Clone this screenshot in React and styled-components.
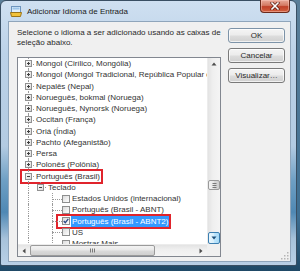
import React from 'react';
import styled, { createGlobalStyle, css } from 'styled-components';

const GlobalStyle = createGlobalStyle`
  html, body { margin: 0; padding: 0; }
  body {
    width: 300px;
    height: 271px;
    overflow: hidden;
    background: #24506f;
    font-family: "Liberation Sans", Arial, sans-serif;
    font-size: 8px;
    color: #2a2a2a;
  }
`;

const Desktop = styled.div`
  width: 300px;
  height: 271px;
  background: linear-gradient(to bottom, #5b7f99 0%, #3d6e92 80%, #1f4966 100%);
`;

const Window = styled.div`
  box-sizing: border-box;
  width: 297px;
  height: 266px;
  display: flex;
  flex-direction: column;
  padding: 0 5px 3px 7px;
  border: 1px solid #3a4f63;
  border-radius: 6px 6px 2px 2px;
  background: linear-gradient(to bottom,
    #cfe0f1 0%, #bcd2e8 20%, #b3cbe2 55%, #6e9fc4 68%, #4f88b4 80%, #a7c2da 90%, #b9d0e6 100%);
`;

const TitleBar = styled.div`
  height: 20px;
  display: flex;
  align-items: center;
  padding-left: 2px;
`;

const Title = styled.span`
  margin-left: 5px;
  font-size: 8px;
  color: #1a1a1a;
`;

const CloseButton = styled.div`
  align-self: flex-start;
  margin: -1px 1px 0 auto;
  width: 30px;
  height: 13px;
  display: flex;
  align-items: center;
  justify-content: center;
  box-sizing: border-box;
  border: 1px solid #6b2a1c;
  border-top: none;
  border-radius: 0 0 4px 4px;
  background: linear-gradient(to bottom, #e9a99a 0%, #d47a64 45%, #c0412a 55%, #d2603f 100%);
  box-shadow: inset 0 0 0 1px rgba(255, 210, 200, 0.45);
`;

const Client = styled.div`
  position: relative;
  flex: 1;
  display: flex;
  padding: 6px 5px 0 8px;
  background: #f0f0f0;
  border: 1px solid #8fa5bb;
`;

const MainCol = styled.div`
  width: 204px;
  display: flex;
  flex-direction: column;
`;

const Description = styled.p`
  margin: 0 0 9px;
  line-height: 10px;
`;

const ButtonCol = styled.div`
  width: 57px;
  margin-left: 7px;
  display: flex;
  flex-direction: column;
  gap: 5px;
`;

const Button = styled.div`
  height: 15px;
  box-sizing: border-box;
  display: flex;
  align-items: center;
  justify-content: center;
  white-space: nowrap;
  overflow: hidden;
  border: 1px solid ${p => (p.$default ? '#7d93a8' : '#7a7a7a')};
  border-radius: 3px;
  background: linear-gradient(to bottom, #f4f4f4 0%, #ececec 48%, #dddddd 52%, #d0d0d0 100%);
  box-shadow: inset 0 0 0 1px rgba(255, 255, 255, 0.7);
`;

const TreeBox = styled.div`
  height: 200px;
  box-sizing: border-box;
  border: 1px solid #828790;
  background: #fff;
  display: grid;
  grid-template-columns: 1fr 13px;
  grid-template-rows: 1fr 12px;
  overflow: hidden;
`;

const Viewport = styled.div`
  overflow: hidden;
  white-space: nowrap;
  color: #333;
`;

const Row = styled.div`
  height: 11.25px;
  display: flex;
  align-items: stretch;
  padding-left: 4px;
`;

const dotted = '1px dotted #9a9a9a';

const Guide = styled.div`
  position: relative;
  width: 12px;
  flex: none;
  ${p => p.$line && css`
    &::before {
      content: '';
      position: absolute;
      left: 6px;
      top: 0;
      bottom: 0;
      border-left: ${dotted};
    }
  `}
`;

const Expander = styled.div`
  position: relative;
  width: 12px;
  flex: none;
  display: flex;
  align-items: center;
  justify-content: center;
  &::before {
    content: '';
    position: absolute;
    left: 6px;
    top: 0;
    height: ${p => (p.$last ? '50%' : '100%')};
    border-left: ${dotted};
  }
  &::after {
    content: '';
    position: absolute;
    left: 6px;
    right: ${p => (p.$leaf ? '-4px' : '0')};
    top: 50%;
    border-top: ${dotted};
  }
  svg { position: relative; z-index: 1; }
`;

const Mark = styled.div`
  display: flex;
  align-items: stretch;
  ${p => p.$marked && css`
    outline: 2px solid #e0242c;
    outline-offset: 0;
  `}
`;

const Check = styled.div`
  align-self: center;
  width: 8px;
  height: 8px;
  box-sizing: border-box;
  margin-left: 4px;
  border: 1px solid #8e8f8f;
  background: linear-gradient(135deg, #dcdcdc 0%, #f4f4f4 70%, #ffffff 100%);
  display: flex;
  align-items: center;
  justify-content: center;
`;

const Label = styled.span`
  display: flex;
  align-items: center;
  padding: 0 1px;
  margin-left: 1px;
  ${p => p.$selected && css`
    background: #3399ff;
    color: #fff;
  `}
`;

const VScroll = styled.div`
  display: flex;
  flex-direction: column;
  background: linear-gradient(to right, #e3e3e3 0%, #efefef 40%, #f4f4f4 100%);
  border-left: 1px solid #ececec;
`;

const HScroll = styled.div`
  display: flex;
  background: linear-gradient(to bottom, #e3e3e3 0%, #efefef 40%, #f4f4f4 100%);
  border-top: 1px solid #ececec;
`;

const Corner = styled.div`
  background: #f0f0f0;
`;

const ArrowBtn = styled.div`
  flex: none;
  width: ${p => (p.$horizontal ? '12px' : 'auto')};
  height: ${p => (p.$horizontal ? 'auto' : '12px')};
  box-sizing: border-box;
  display: flex;
  align-items: center;
  justify-content: center;
  ${p => p.$hover && css`
    border: 1px solid #3c7fb1;
    border-radius: 2px;
    background: linear-gradient(to right, #eaf6fd 0%, #d9f0fc 45%, #bee6fd 55%, #a7d9f5 100%);
  `}
`;

const Track = styled.div`
  flex: 1;
  display: flex;
  flex-direction: ${p => (p.$horizontal ? 'row' : 'column')};
`;

const Thumb = styled.div`
  box-sizing: border-box;
  border: 1px solid #9a9a9a;
  border-radius: 2px;
  display: flex;
  align-items: center;
  justify-content: center;
  ${p => (p.$horizontal
    ? css`
      width: ${p.$size}px;
      margin-left: ${p.$offset}px;
      background: linear-gradient(to bottom, #f3f3f3 0%, #e8e8e8 45%, #d9d9d9 55%, #cfcfcf 100%);
    `
    : css`
      height: ${p.$size}px;
      margin-top: ${p.$offset}px;
      background: linear-gradient(to right, #f3f3f3 0%, #e8e8e8 45%, #d9d9d9 55%, #cfcfcf 100%);
    `)}
`;

const SizeGrip = styled.svg`
  position: absolute;
  right: 1px;
  bottom: 1px;
`;

const WindowIcon = () => (
  <svg width="12" height="11" viewBox="0 0 12 11">
    <rect x="1.5" y="0.5" width="9" height="6" fill="#dfeefa" stroke="#6e95bd" />
    <rect x="2.5" y="1.5" width="7" height="2" fill="#9cc4e8" />
    <path d="M0.5 6.5 L11.5 6.5 L10.5 10.5 L1.5 10.5 Z" fill="#f2c23a" stroke="#9b7418" />
  </svg>
);

const CloseGlyph = () => (
  <svg width="10" height="8" viewBox="0 0 10 8">
    <path d="M2 1 L8 7 M8 1 L2 7" stroke="#5a1a10" strokeWidth="3" strokeLinecap="square" />
    <path d="M2 1 L8 7 M8 1 L2 7" stroke="#ffffff" strokeWidth="1.6" strokeLinecap="square" />
  </svg>
);

const ExpandBox = ({ open }) => (
  <svg width="7" height="7" viewBox="0 0 7 7">
    <defs>
      <linearGradient id="eb" x1="0" y1="0" x2="1" y2="1">
        <stop offset="0" stopColor="#ffffff" />
        <stop offset="1" stopColor="#d8d8d8" />
      </linearGradient>
    </defs>
    <rect x="0.5" y="0.5" width="6" height="6" fill="url(#eb)" stroke="#919191" />
    <path d="M2 3.5 H5" stroke="#404040" />
    {!open && <path d="M3.5 2 V5" stroke="#404040" />}
  </svg>
);

const CheckGlyph = () => (
  <svg width="6" height="6" viewBox="0 0 6 6">
    <path d="M0.8 3 L2.3 4.7 L5.3 0.9" fill="none" stroke="#2a4a86" strokeWidth="1.3" />
  </svg>
);

const Arrow = ({ dir, color = '#4d4d4d' }) => {
  const d = {
    up: 'M0.5 3.5 L3 0.5 L5.5 3.5 Z',
    down: 'M0.5 0.5 L3 3.5 L5.5 0.5 Z',
    left: 'M3.5 0.5 L0.5 3 L3.5 5.5 Z',
    right: 'M0.5 0.5 L3.5 3 L0.5 5.5 Z',
  }[dir];
  const vertical = dir === 'up' || dir === 'down';
  return (
    <svg width={vertical ? 6 : 4} height={vertical ? 4 : 6} viewBox={vertical ? '0 0 6 4' : '0 0 4 6'}>
      <path d={d} fill={color} />
    </svg>
  );
};

const Grip = ({ horizontal }) => (
  <svg width="5" height="5" viewBox="0 0 5 5">
    {horizontal
      ? [0, 2, 4].map(x => <path key={x} d={`M${x + 0.5} 0.5 V4.5`} stroke="#7a7a7a" />)
      : [0, 2, 4].map(y => <path key={y} d={`M0.5 ${y + 0.5} H4.5`} stroke="#7a7a7a" />)}
  </svg>
);

const items = [
  { level: 0, text: 'Mongol (Cirílico, Mongólia)' },
  { level: 0, text: 'Mongol (Mongol Tradicional, República Popular da China)' },
  { level: 0, text: 'Nepalês (Nepal)' },
  { level: 0, text: 'Norueguês, bokmal (Noruega)' },
  { level: 0, text: 'Norueguês, Nynorsk (Noruega)' },
  { level: 0, text: 'Occitan (França)' },
  { level: 0, text: 'Oriá (Índia)' },
  { level: 0, text: 'Pachto (Afeganistão)' },
  { level: 0, text: 'Persa' },
  { level: 0, text: 'Polonês (Polônia)' },
  { level: 0, text: 'Português (Brasil)', open: true, marked: true },
  { level: 1, text: 'Teclado', open: true, last: true },
  { level: 2, text: 'Estados Unidos (internacional)', leaf: true },
  { level: 2, text: 'Português (Brasil - ABNT)', leaf: true },
  { level: 2, text: 'Português (Brasil - ABNT2)', leaf: true, checked: true, selected: true, marked: true },
  { level: 2, text: 'US', leaf: true },
  { level: 2, text: 'Mostrar Mais...', leaf: true },
];

function TreeRow({ item }) {
  // level 0 keeps its sibling line; Teclado is the last child, so no line under it
  const guides = [];
  for (let i = 0; i < item.level; i += 1) {
    guides.push(<Guide key={i} $line={i === 0} />);
  }
  return (
    <Row>
      {guides}
      {item.leaf ? (
        <>
          <Expander $leaf />
          <Mark $marked={item.marked}>
            <Check>{item.checked && <CheckGlyph />}</Check>
            <Label $selected={item.selected}>{item.text}</Label>
          </Mark>
        </>
      ) : (
        <Mark $marked={item.marked}>
          <Expander $last={item.last}>
            <ExpandBox open={item.open} />
          </Expander>
          <Label>{item.text}</Label>
        </Mark>
      )}
    </Row>
  );
}

export default function App() {
  return (
    <Desktop>
      <GlobalStyle />
      <Window>
        <TitleBar>
          <WindowIcon />
          <Title>Adicionar Idioma de Entrada</Title>
          <CloseButton>
            <CloseGlyph />
          </CloseButton>
        </TitleBar>
        <Client>
          <MainCol>
            <Description>
              Selecione o idioma a ser adicionado usando as caixas de
              <br />
              seleção abaixo.
            </Description>
            <TreeBox>
              <Viewport>
                {items.map(item => <TreeRow key={item.text} item={item} />)}
              </Viewport>
              <VScroll>
                <ArrowBtn><Arrow dir="up" /></ArrowBtn>
                <Track>
                  <Thumb $size={10} $offset={110}><Grip /></Thumb>
                </Track>
                <ArrowBtn $hover><Arrow dir="down" color="#1d4f7a" /></ArrowBtn>
              </VScroll>
              <HScroll>
                <ArrowBtn $horizontal><Arrow dir="left" /></ArrowBtn>
                <Track $horizontal>
                  <Thumb $horizontal $size={125} $offset={0}><Grip horizontal /></Thumb>
                </Track>
                <ArrowBtn $horizontal><Arrow dir="right" /></ArrowBtn>
              </HScroll>
              <Corner />
            </TreeBox>
          </MainCol>
          <ButtonCol>
            <Button $default>OK</Button>
            <Button>Cancelar</Button>
            <Button>Visualizar…</Button>
          </ButtonCol>
          <SizeGrip width="9" height="9" viewBox="0 0 9 9">
            {[[7, 1], [7, 4], [4, 4], [7, 7], [4, 7], [1, 7]].map(([x, y]) => (
              <rect key={`${x}-${y}`} x={x} y={y} width="1.5" height="1.5" fill="#b5b5b5" />
            ))}
          </SizeGrip>
        </Client>
      </Window>
    </Desktop>
  );
}
